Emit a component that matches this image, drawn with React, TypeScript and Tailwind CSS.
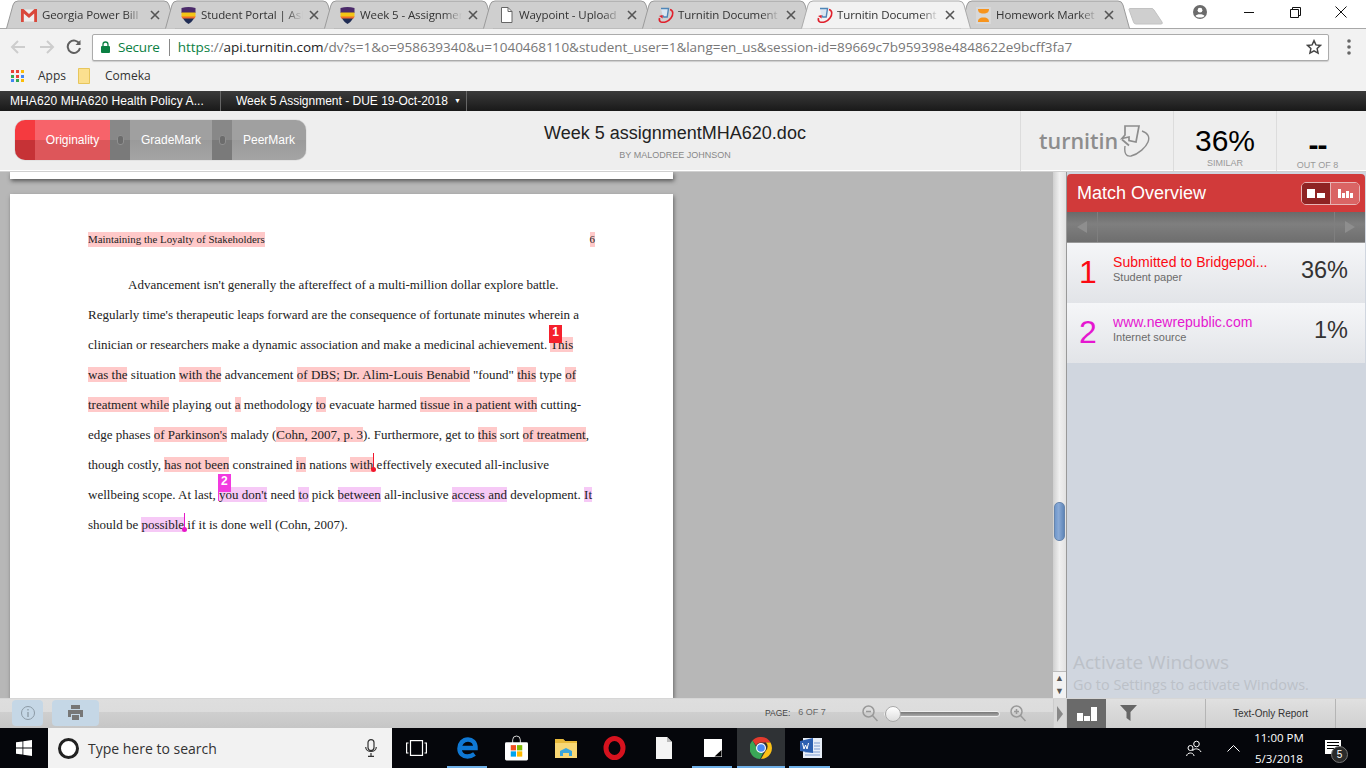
import React from "react";

const TiiIcon = ({ c = "#e0202c" }: { c?: string }) => (
  <svg width="17" height="17" viewBox="0 0 17 17" fill="none">
    <path d="M4 1.500h7.500l-1.300 8.500H6.800L5.600 8.500" stroke="#4f86b8" strokeWidth="1.400" fill="#dbe7f2" />
    <path d="M13 2.500c3.500 1 3.500 5 1 8.500-2.500 3.500-7 5-10 4-1.600-.6-2-2-1.500-4" stroke={c} strokeWidth="1.600" />
    <path d="M2 9l3.500-1 .2 3.500z" fill={c} />
  </svg>
);
const Gmail = () => (
  <svg width="16" height="13" viewBox="0 0 16 13">
    <rect x="0.500" y="0.500" width="15" height="12" fill="#eee" />
    <path d="M0 0h2.500L8 5l5.500-5H16v13h-2.800V4.600L8 9 2.800 4.600V13H0z" fill="#d9483b" />
  </svg>
);
const Shield = () => (
  <svg width="15" height="17" viewBox="0 0 15 17">
    <path d="M0.500 1Q7.500 -1 14.500 1V6H0.500z" fill="#4b2a6a" />
    <path d="M0.500 5.500H14.500V10H0.500z" fill="#f3c515" />
    <path d="M0.500 9.500H14.500Q14 11 13 12H2Q1 11 .5 9.500z" fill="#ef6c2c" />
    <path d="M2 11.500H13Q11 15 7.500 17 4 15 2 11.500z" fill="#1f2c54" />
  </svg>
);
const DocIcon = () => (
  <svg width="13" height="16" viewBox="0 0 13 16" fill="#fff" stroke="#666">
    <path d="M1.500.5h6.500l4 4v11h-10.500z" />
    <path d="M8 .5v4h4" fill="none" />
  </svg>
);
const Hw = () => (
  <svg width="15" height="17" viewBox="0 0 15 17">
    <rect x="0" y="0" width="15" height="17" fill="#d8d8d8" />
    <path d="M2 2h11c0 3-1.500 4.500-5.500 4.500S2 5 2 2zM2 15h11c0-3-1.500-4.500-5.500-4.500S2 12 2 15z" fill="#f7941d" />
  </svg>
);

const tabs: { icon: React.ReactNode; title: string; active?: boolean }[] = [
  { icon: <Gmail />, title: "Georgia Power Bill" },
  { icon: <Shield />, title: "Student Portal | Ask" },
  { icon: <Shield />, title: "Week 5 - Assignment" },
  { icon: <DocIcon />, title: "Waypoint - Upload" },
  { icon: <TiiIcon />, title: "Turnitin Document" },
  { icon: <TiiIcon />, title: "Turnitin Document", active: true },
  { icon: <Hw />, title: "Homework Market" },
];

const Tab = ({ icon, title, active }: { icon: React.ReactNode; title: string; active?: boolean }) => (
  <div className={`relative w-[170px] h-[29px] -mr-[11px] shrink-0 ${active ? "z-10" : ""}`}>
    <svg className="absolute inset-0" width="170" height="29" viewBox="0 0 170 29">
      <path
        d="M0.500 28.500L7 5Q8 1 12 1H158Q162 1 163 5L169.500 28.500"
        fill={active ? "#f2f2f2" : "#cfcfcf"}
        stroke={active ? "#aaaaaa" : "#9a9a9a"}
      />
    </svg>
    <div className="relative flex items-center h-[29px] pl-[14px] pt-[1px]">
      <span className="w-[18px] flex justify-center shrink-0">{icon}</span>
      <span className="ml-[4px] w-[102px] overflow-hidden whitespace-nowrap text-[11.500px] tracking-[-0.1px] text-[#333] font-['Open_Sans','Noto_Sans',sans-serif] [mask-image:linear-gradient(90deg,#000_82%,transparent)]">
        {title}
      </span>
      <svg className="ml-[6px] shrink-0" width="10" height="10" viewBox="0 0 10 10" stroke="#555" strokeWidth="1.600">
        <path d="M1 1l8 8M9 1l-8 8" />
      </svg>
    </div>
  </div>
);

const Hl = ({ children }: { children: React.ReactNode }) => <span className="bg-[#ffc9c9]">{children}</span>;
const Pk = ({ children }: { children: React.ReactNode }) => <span className="bg-[#f6c9f6]">{children}</span>;

const Line = ({ className = "", children }: { className?: string; children: React.ReactNode }) => (
  <p className={`h-[30px] leading-[30px] whitespace-nowrap [text-align-last:justify] ${className}`}>{children}</p>
);

const Segment = ({ label, width }: { label: string; width: string }) => (
  <div className="flex h-full">
    <div className="relative w-[20px] h-full bg-[linear-gradient(#888_0,#888_49%,#7a7a7a_50%,#7a7a7a_100%)] flex items-center justify-center">
      <span className="w-[7px] h-[10px] rounded-[3px] bg-[#6c6c6c] border border-[#909090]" />
    </div>
    <div className={`${width} h-full flex items-center justify-center text-white text-[12px] bg-[linear-gradient(#a0a0a0_0,#a0a0a0_49%,#9a9a9a_50%,#a4a4a4_100%)]`}>
      {label}
    </div>
  </div>
);

const Match = ({ n, title, sub, pct, color }: { n: string; title: string; sub: string; pct: string; color: string }) => (
  <div className="h-[60px] flex items-center bg-[linear-gradient(#f5f6f8,#e2e4e8)]">
    <div className={`w-[46px] pl-[12px] pb-[2px] text-[32px] leading-none ${color}`}>{n}</div>
    <div className="w-[160px] pb-[9px]">
      <div className={`text-[14px] leading-[16px] truncate tracking-[0.05px] ${color}`}>{title}</div>
      <div className="text-[11px] leading-[14px] text-[#6b6b6b] font-medium">{sub}</div>
    </div>
    <div className="flex-1 text-right pr-[17px] text-[23.500px] leading-none text-[#333] pb-[4px]">{pct}</div>
  </div>
);

const TaskIcon = ({ line, children }: { line?: boolean; children: React.ReactNode }) => (
  <div className="relative w-[49px] flex items-center justify-center">
    {children}
    {line && <span className="absolute bottom-0 left-[4px] right-[5px] h-[2px] bg-[#6fb0e8]" />}
  </div>
);

export default function App() {
  return (
    <div className="w-[1366px] h-[768px] overflow-hidden flex flex-col bg-white font-['Liberation_Sans',Arial,sans-serif]">
      {/* Chrome tabs */}
      <div className="h-[29px] shrink-0 flex bg-white border-b border-[#a8a8a8] relative">
        <div className="flex pl-[6px]">
          {tabs.map((t, i) => (
            <Tab key={i} {...t} />
          ))}
          <svg className="ml-[9px] mt-[8px]" width="36" height="17" viewBox="0 0 36 17">
            <path d="M1 1.500Q1 .5 2 .5H24Q25 .5 26 2L34 14Q35 16 33 16H8Q6 16 5.500 14z" fill="#cfcfcf" stroke="#c2c2c2" />
          </svg>
        </div>
        <div className="ml-auto flex items-center">
          <svg className="mr-[37px] mb-[4px]" width="14" height="14" viewBox="0 0 14 14">
            <circle cx="7" cy="7" r="7" fill="#6b6b6b" />
            <circle cx="7" cy="5.200" r="2.400" fill="#fff" />
            <path d="M2.500 11c1-2.500 8-2.500 9 0-2 2-7 2-9 0z" fill="#fff" />
          </svg>
          <svg className="mr-[35px] mb-[4px]" width="11" height="11" viewBox="0 0 11 11" stroke="#111">
            <path d="M0 5.500h10" />
          </svg>
          <svg className="mr-[34px] mb-[4px]" width="11" height="11" viewBox="0 0 11 11" fill="none" stroke="#111">
            <path d="M.5 2.500h8v8h-8zM2.500 2.500V.5h8v8h-2" />
          </svg>
          <svg className="mr-[19px] mb-[4px]" width="12" height="12" viewBox="0 0 12 12" stroke="#111">
            <path d="M.5.5l11 11M11.500.5l-11 11" />
          </svg>
        </div>
      </div>

      {/* Toolbar */}
      <div className="h-[36px] shrink-0 flex items-center bg-[#f2f2f2]">
        <svg className="ml-[10px]" width="16" height="16" viewBox="0 0 16 16" fill="none" stroke="#cdcdcd" strokeWidth="2">
          <path d="M15 8H2M8 2L2 8l6 6" />
        </svg>
        <svg className="ml-[13px]" width="16" height="16" viewBox="0 0 16 16" fill="none" stroke="#cdcdcd" strokeWidth="2">
          <path d="M1 8h13M8 2l6 6-6 6" />
        </svg>
        <svg className="ml-[11px]" width="16" height="16" viewBox="0 0 16 16" fill="none" stroke="#5f5f5f" strokeWidth="2">
          <path d="M13.500 5A6.200 6.200 0 1 0 14 9" />
          <path d="M14.500 1v5h-5z" fill="#5f5f5f" stroke="none" />
        </svg>
        <div className="ml-[10px] w-[1237px] h-[27px] bg-white border border-[#ababab] rounded-[2px] flex items-center text-[13.500px] font-['Open_Sans','Noto_Sans',sans-serif] shadow-[0_1px_1px_#ccc]">
          <svg className="ml-[8px]" width="9" height="12" viewBox="0 0 9 12">
            <path d="M2 5V3.500a2.500 2.500 0 0 1 5 0V5" fill="none" stroke="#0b8043" strokeWidth="1.300" />
            <rect y="5" width="9" height="7" rx="1" fill="#0b8043" />
          </svg>
          <span className="ml-[8px] text-[#0b8043] tracking-[-0.2px]">Secure</span>
          <span className="ml-[9px] w-px h-[17px] bg-[#888]" />
          <span className="ml-[8px] whitespace-nowrap text-[#777] tracking-[-0.01px]">
            <span className="text-[#0b8043]">https</span>://<span className="text-[#222]">api.turnitin.com</span>
            /dv?s=1&amp;o=958639340&amp;u=1040468110&amp;student_user=1&amp;lang=en_us&amp;session-id=89669c7b959398e4848622e9bcff3fa7
          </span>
          <svg className="ml-auto mr-[6px]" width="16" height="16" viewBox="0 0 24 24" fill="none" stroke="#444" strokeWidth="2.200">
            <path d="M12 2.500l2.900 6.300 6.900.8-5.100 4.700 1.400 6.800-6.100-3.400-6.100 3.400 1.400-6.800L2.300 9.600l6.900-.8z" />
          </svg>
        </div>
        <svg className="ml-[18px]" width="4" height="16" viewBox="0 0 4 16" fill="#666">
          <circle cx="2" cy="2" r="1.800" />
          <circle cx="2" cy="8" r="1.800" />
          <circle cx="2" cy="14" r="1.800" />
        </svg>
      </div>

      {/* Bookmarks */}
      <div className="h-[26px] shrink-0 flex items-center bg-[#f2f2f2] text-[12px] text-[#333] font-['Open_Sans','Noto_Sans',sans-serif] pb-[4px]">
        <div className="ml-[11px] grid grid-cols-3 gap-[1.500px] w-[13px]">
          {["#e94235", "#e94235", "#fbbc05", "#34a853", "#e94235", "#4285f4", "#4285f4", "#34a853", "#fbbc05"].map((c, i) => (
            <span key={i} className="w-[3px] h-[3px]" style={{ background: c }} />
          ))}
        </div>
        <span className="ml-[14px]">Apps</span>
        <svg className="ml-[12px]" width="12" height="16" viewBox="0 0 12 16">
          <path d="M.5.5h11v15H.5z" fill="#fbe08f" stroke="#e7c65c" />
        </svg>
        <span className="ml-[15px]">Comeka</span>
      </div>

      {/* Course bar */}
      <div className="h-[20px] shrink-0 flex items-center bg-[linear-gradient(#3b3b3b,#191919)] text-white text-[12px]">
        <div className="w-[220px] pl-[10px] whitespace-nowrap tracking-[0.1px]">MHA620 MHA620 Health Policy A...</div>
        <div className="w-px h-full bg-[#666]" />
        <div className="w-[245px] pl-[15px] flex items-center whitespace-nowrap">
          Week 5 Assignment - DUE 19-Oct-2018
          <span className="ml-[6px] text-[7px]">▼</span>
        </div>
        <div className="w-px h-full bg-[#666]" />
      </div>

      {/* Header */}
      <div className="h-[61px] shrink-0 flex bg-[#eeeeee] border-b border-[#d0d0d0] shadow-[inset_0_-1px_0_#fff]">
        <div className="w-[510px] pl-[15px] pt-[9px]">
          <div className="w-[291px] h-[40px] rounded-[10px] overflow-hidden flex shadow-[0_0_1px_#888]">
            <div className="w-[20px] h-full bg-[linear-gradient(#f53a3f_0,#f53a3f_49%,#c63236_50%,#c63236_100%)]" />
            <div className="w-[75px] h-full flex items-center justify-center text-white text-[12px] bg-[linear-gradient(#f7636a_0,#f7636a_49%,#dd565a_50%,#dd565a_100%)]">
              Originality
            </div>
            <Segment label="GradeMark" width="w-[82px]" />
            <Segment label="PeerMark" width="w-[74px]" />
          </div>
        </div>
        <div className="w-[330px] text-center pt-[12px]">
          <div className="text-[18px] leading-[21px] text-[#222]">Week 5 assignmentMHA620.doc</div>
          <div className="text-[9px] leading-[12px] mt-[5px] text-[#888]">BY MALODREE JOHNSON</div>
        </div>
        <div className="ml-auto w-[153px] border-l border-[#dcdcdc] flex items-center pl-[18px] pb-[1px]">
          <span className="font-['Open_Sans','Noto_Sans',sans-serif] font-semibold text-[#8d8d8d] text-[21.500px] leading-none">turnitin</span>
          <svg className="ml-0 mt-[2px]" width="32" height="33" viewBox="0 0 32 33" fill="none" stroke="#8d8d8d" strokeWidth="1.700">
            <path d="M7 1h14l-3 16-7-1.500V12l-7 1.500 3-3.500z" />
            <path d="M4 14.500l7 6" />
            <path d="M24 6c6 2 8 6 6 11s-9 12-17 14c-5 1-7-3-6-10" strokeWidth="1.400" />
          </svg>
        </div>
        <div className="w-[103px] border-l border-[#dcdcdc] text-center pt-[13px]">
          <div className="text-[30px] leading-[34px] text-black">36%</div>
          <div className="text-[9px] leading-[12px] -mt-[1px] text-[#999]">SIMILAR</div>
        </div>
        <div className="w-[90px] border-l border-[#dcdcdc] text-center pt-[20px] pr-[8px]">
          <div className="text-[30px] leading-[28px] font-bold text-black tracking-[-1px]">--</div>
          <div className="text-[9px] leading-[12px] text-[#999]">OUT OF 8</div>
        </div>
      </div>

      {/* Main */}
      <div className="flex-1 min-h-0 flex">
        <div className="w-[1053px] h-full bg-[#b7b7b7] relative overflow-hidden pl-[10px]">
          <div className="w-[663px] h-[7px] bg-white shadow-[1px_2px_4px_#555]" />
          <div className="mt-[15px] w-[663px] h-[504px] bg-white shadow-[1px_2px_4px_#666] pl-[78px] pt-[38px] font-['Liberation_Serif','Times_New_Roman',serif] text-[13px] text-[#222]">
            <div className="w-[507px] flex justify-between h-[15px] leading-[15px] text-[10.900px] mb-[23px]">
              <span className="bg-[#ffc9c9]">Maintaining the Loyalty of Stakeholders</span>
              <span className="bg-[#ffc9c9]">6</span>
            </div>
            <Line className="w-[469px] pl-[40px]">Advancement isn't generally the aftereffect of a multi-million dollar explore battle.</Line>
            <Line className="w-[491px]">Regularly time's therapeutic leaps forward are the consequence of fortunate minutes wherein a</Line>
            <Line className="w-[485px]">
              clinician or researchers make a dynamic association and make a medicinal achievement.{" "}
              <span className="relative bg-[#ffc9c9]">
                This
                <span className="absolute -top-[12px] -left-[1px] w-[13px] h-[18px] bg-[#f5202c] text-white text-[12px] leading-[15px] font-bold text-center font-['Liberation_Sans',sans-serif] [text-align-last:center]">
                  1
                </span>
              </span>
            </Line>
            <Line className="w-[488px]">
              <Hl>was the</Hl> situation <Hl>with the</Hl> advancement <Hl>of DBS; Dr. Alim-Louis Benabid</Hl> "found" <Hl>this</Hl> type <Hl>of</Hl>
            </Line>
            <Line className="w-[493px]">
              <Hl>treatment while</Hl> playing out <Hl>a</Hl> methodology <Hl>to</Hl> evacuate harmed <Hl>tissue in a patient with</Hl> cutting-
            </Line>
            <Line className="w-[500px]">
              edge phases <Hl>of Parkinson's</Hl> malady (<Hl>Cohn, 2007, p. 3</Hl>). Furthermore, get to <Hl>this</Hl> sort <Hl>of treatment</Hl>,
            </Line>
            <Line className="w-[461px]">
              though costly, <Hl>has not been</Hl> constrained <Hl>in</Hl> nations{" "}
              <span className="relative bg-[#ffc9c9]">
                with
                <span className="absolute -right-[1px] top-[-4px] w-px h-[16px] bg-[#f1172c]" />
                <span className="absolute -right-[3px] top-[10px] w-[5px] h-[5px] rounded-full bg-[#f1172c]" />
              </span>{" "}
              effectively executed all-inclusive
            </Line>
            <Line className="w-[504px]">
              wellbeing scope. At last,{" "}
              <span className="relative bg-[#f6c9f6]">
                you don't
                <span className="absolute -top-[13px] -left-[1px] w-[13px] h-[18px] bg-[#f23ae0] text-white text-[12px] leading-[15px] font-bold text-center font-['Liberation_Sans',sans-serif] [text-align-last:center]">
                  2
                </span>
                <span className="absolute top-[4px] -left-[1px] w-px h-[10px] bg-[#f23ae0]" />
              </span>{" "}
              need <Pk>to</Pk> pick <Pk>between</Pk> all-inclusive <Pk>access and</Pk> development. <Pk>It</Pk>
            </Line>
            <Line className="w-[259px]">
              should be{" "}
              <span className="relative bg-[#f6c9f6]">
                possible
                <span className="absolute -right-[1px] top-[-4px] w-px h-[16px] bg-[#e617c8]" />
                <span className="absolute -right-[3px] top-[10px] w-[5px] h-[5px] rounded-full bg-[#e617c8]" />
              </span>{" "}
              if it is done well (Cohn, 2007).
            </Line>
          </div>
        </div>

        {/* Scrollbar */}
        <div className="w-[14px] h-full flex flex-col bg-[linear-gradient(90deg,#cfcfcf,#f0f0f0_50%,#e2e2e2)] border-r border-[#999] pt-[330px]">
          <div className="ml-[1px] w-[11px] h-[39px] rounded-[5px] bg-[linear-gradient(90deg,#6f97cb,#8aaad6_40%,#5f86b8)] border border-[#6785ad]" />
          <div className="mt-auto bg-[#f2f2f2] h-[27px] flex flex-col items-center text-[9px] leading-[13px] text-[#555] border-t border-[#bbb]">
            <span>▲</span>
            <span>▼</span>
          </div>
        </div>

        {/* Match panel */}
        <div className="flex-1 h-full flex flex-col bg-[#d0d6df] pt-[2px] pr-[1px] relative">
          <div className="h-[38px] shrink-0 bg-[#d13a3a] rounded-t-[4px] flex items-center pl-[10px] text-white text-[18px]">
            Match Overview
            <div className="ml-auto mr-[5px] w-[59px] h-[23px] border border-[#e8b5b5] rounded-[5px] flex overflow-hidden">
              <div className="w-[29px] bg-[#8f2323] flex items-end justify-center gap-[2px] pb-[6px] border-r border-[#e8b5b5]">
                <span className="w-[8px] h-[9px] bg-white" />
                <span className="w-[8px] h-[5px] bg-white" />
              </div>
              <div className="flex-1 bg-[#da6464] flex items-end justify-center gap-[1px] pb-[6px]">
                <span className="w-[3px] h-[9px] bg-white" />
                <span className="w-[3px] h-[5px] bg-white" />
                <span className="w-[3px] h-[7px] bg-white" />
                <span className="w-[3px] h-[5px] bg-white" />
              </div>
            </div>
          </div>
          <div className="h-[31px] shrink-0 bg-[linear-gradient(#6a6a6a,#7f7f7f_40%,#6e6e6e)] flex items-center justify-between border-b border-[#999]">
            <div className="w-[31px] h-full border-r border-[#7f7f7f] flex items-center justify-center">
              <svg width="10" height="12" viewBox="0 0 10 12" fill="#8e8e8e"><path d="M10 0v12L0 6z" /></svg>
            </div>
            <div className="w-[31px] h-full border-l border-[#7f7f7f] flex items-center justify-center">
              <svg width="10" height="12" viewBox="0 0 10 12" fill="#8e8e8e"><path d="M0 0v12l10-6z" /></svg>
            </div>
          </div>
          <Match n="1" title="Submitted to Bridgepoi..." sub="Student paper" pct="36%" color="text-[#fb0a12]" />
          <Match n="2" title="www.newrepublic.com" sub="Internet source" pct="1%" color="text-[#e516d0]" />
          <div className="mt-auto pl-[6px] pb-[3px] text-[#bcc1c8] font-['Open_Sans','Noto_Sans',sans-serif]">
            <div className="text-[19px] leading-[24px]">Activate Windows</div>
            <div className="text-[14.400px] leading-[20px] mt-[1px] whitespace-nowrap">Go to Settings to activate Windows.</div>
          </div>
        </div>
      </div>

      {/* Bottom bar */}
      <div className="h-[30px] shrink-0 flex bg-[linear-gradient(#dedede,#dcdcdc_45%,#cfcfcf_46%,#c6c6c6)] border-t border-[#d6d6d6]">
        <div className="w-[1053px] flex items-center pl-[12px] relative">
          <div className="w-[31px] h-[26px] -mt-[2px] rounded-[4px] bg-[#c5d7e6] flex items-center justify-center">
            <svg width="14" height="14" viewBox="0 0 14 14" fill="none" stroke="#8c9aa5">
              <circle cx="7" cy="7" r="6.500" />
              <path d="M7 3v1.500M7 6v5" strokeWidth="1.300" />
            </svg>
          </div>
          <div className="ml-[9px] w-[47px] h-[26px] -mt-[2px] rounded-[4px] bg-[#c5d7e6] flex items-center justify-center">
            <svg width="15" height="15" viewBox="0 0 15 15" fill="#777">
              <path d="M3 0h9v4H3zM0 5h15v7h-3v-3H3v3H0zM4 10h7v5H4z" />
            </svg>
          </div>
          <span className="ml-[666px] text-[8.500px] text-[#444] mb-[1px]">PAGE:</span>
          <span className="ml-[8px] text-[9px] text-[#666] mb-[1px]">6 OF 7</span>
          <svg className="ml-[36px]" width="16" height="17" viewBox="0 0 16 17" fill="none" stroke="#999" strokeWidth="1.500">
            <circle cx="6.500" cy="6.500" r="5.500" />
            <path d="M10.500 10.500l5 5.500M4 6.500h5" />
          </svg>
          <div className="relative ml-[6px] w-[116px] h-[6px] rounded-[3px] bg-[linear-gradient(#777,#aaa)] border border-[#eee]">
            <span className="absolute left-0 -top-[6px] w-[16px] h-[16px] rounded-full bg-[linear-gradient(#fff,#ddd)] border border-[#aaa]" />
          </div>
          <svg className="ml-[10px]" width="16" height="17" viewBox="0 0 16 17" fill="none" stroke="#999" strokeWidth="1.500">
            <circle cx="6.500" cy="6.500" r="5.500" />
            <path d="M10.500 10.500l5 5.500M4 6.500h5M6.500 4v5" />
          </svg>
        </div>
        <div className="w-[14px] bg-[#d8d8d8] border-x border-[#ccc] flex items-center justify-center">
          <svg width="6" height="16" viewBox="0 0 6 16" fill="#888">
            <path d="M0 0l6 8-6 8z" />
          </svg>
        </div>
        <div className="flex-1 flex items-stretch bg-[linear-gradient(#e0e0e0,#d0d0d0)]">
          <div className="w-[39px] bg-[#6a6a6a] flex items-end justify-center gap-[1px] pb-[7px]">
            <span className="w-[6px] h-[8px] bg-white" />
            <span className="w-[6px] h-[5px] bg-white" />
            <span className="w-[6px] h-[14px] bg-white" />
          </div>
          <div className="w-[99px] flex items-center pl-[14px] pb-[2px]">
            <svg width="17" height="16" viewBox="0 0 17 16" fill="#666">
              <path d="M0 0h17l-6.500 7v9l-4-3V7z" />
            </svg>
          </div>
          <div className="w-[131px] border-x border-[#b5b5b5] flex items-center justify-center text-[10px] text-[#333]">
            Text-Only Report
          </div>
        </div>
      </div>

      {/* Taskbar */}
      <div className="h-[40px] shrink-0 bg-[#05060b] flex items-stretch text-white">
        <div className="w-[48px] flex items-center justify-center">
          <svg width="16" height="16" viewBox="0 0 16 16" fill="#fff">
            <path d="M0 2.300l6.500-.9v6.200H0zM7.300 1.300L16 0v7.600H7.300zM0 8.400h6.500v6.200L0 13.700zM7.300 8.400H16V16l-8.700-1.300z" />
          </svg>
        </div>
        <div className="w-[344px] bg-[#f2f2f2] flex items-center">
          <span className="ml-[10px] w-[21px] h-[21px] rounded-full border-[3px] border-[#222] bg-white" />
          <span className="ml-[9px] text-[14px] text-[#333] font-['Open_Sans','Noto_Sans',sans-serif]">Type here to search</span>
          <svg className="ml-auto mr-[15px]" width="12" height="18" viewBox="0 0 12 18" fill="none" stroke="#333" strokeWidth="1.200">
            <rect x="3" y=".6" width="6" height="11" rx="3" />
            <path d="M.7 8c0 6 10.600 6 10.600 0M6 14v3M3 17.400h6" />
          </svg>
        </div>
        <div className="w-[48px] mr-[3px] flex items-center justify-center">
          <svg width="21" height="16" viewBox="0 0 21 16" fill="none" stroke="#fff" strokeWidth="1.200">
            <rect x="4.500" y=".6" width="12" height="14.800" />
            <path d="M2.500 3H.6v10h1.900M18.500 3h1.900v10h-1.900" />
          </svg>
        </div>
        <TaskIcon line>
          <svg width="21" height="22" viewBox="0 0 21 22" fill="none" stroke="#0f78d4" strokeWidth="4.500">
            <path d="M3 11h15.500C18.500 5 15 2.500 11 2.500 6 2.500 2.500 6.500 2.500 11.500c0 5 3.500 8 8 8 3 0 5-1 7-2.500" />
          </svg>
        </TaskIcon>
        <TaskIcon>
          <svg width="23" height="26" viewBox="0 0 24 26">
            <path d="M8 8V4.500a4 4 0 0 1 8 0V8" fill="none" stroke="#ddd" />
            <rect y="7" width="24" height="19" rx="1.500" fill="#fff" />
            <rect x="6" y="10" width="5.500" height="5.500" fill="#f25022" />
            <rect x="12.500" y="10" width="5.500" height="5.500" fill="#7fba00" />
            <rect x="6" y="16.500" width="5.500" height="5.500" fill="#00a4ef" />
            <rect x="12.500" y="16.500" width="5.500" height="5.500" fill="#ffb900" />
          </svg>
        </TaskIcon>
        <TaskIcon>
          <svg width="22" height="19" viewBox="0 0 22 19">
            <path d="M0 0h8l2 2h12v17H0z" fill="#f8d775" />
            <path d="M0 0h8l2 2h12v2H0z" fill="#e8b93a" />
            <path d="M5 17v-5l6-3 6 3v5h-3v-3H8v3z" fill="#3aa6dd" />
          </svg>
        </TaskIcon>
        <TaskIcon>
          <svg width="23" height="24" viewBox="0 0 23 24" fill="none" stroke="#d6121e" strokeWidth="5">
            <ellipse cx="11.500" cy="12" rx="8.500" ry="9.500" />
          </svg>
        </TaskIcon>
        <TaskIcon>
          <svg width="16" height="22" viewBox="0 0 16 22">
            <path d="M0 0h11l5 5v17H0z" fill="#f4f4f4" />
            <path d="M11 0l5 5h-5z" fill="#bbb" />
          </svg>
        </TaskIcon>
        <TaskIcon line>
          <svg width="18" height="18" viewBox="0 0 18 18">
            <rect width="18" height="18" fill="#fff" />
            <path d="M17.500 11L10.500 17.500H17.500z" fill="#000" />
          </svg>
        </TaskIcon>
        <div className="relative w-[48px] bg-[#2f3235] flex items-center justify-center">
          <svg width="22" height="22" viewBox="0 0 22 22">
            <path d="M11 0a11 11 0 0 1 9.500 5.500H11a5.500 5.500 0 0 0-5 3L2.500 3.500A11 11 0 0 1 11 0z" fill="#e33b2e" />
            <path d="M20.500 5.500A11 11 0 0 1 11 22l4.800-8.300a5.500 5.500 0 0 0 0-8.200z" fill="#fbc116" />
            <path d="M2.500 3.500L6.800 11a5.500 5.500 0 0 0 6.500 4.500L10 22A11 11 0 0 1 2.500 3.500z" fill="#3aa757" />
            <circle cx="11" cy="11" r="5" fill="#fff" />
            <circle cx="11" cy="11" r="3.800" fill="#4a8af4" />
          </svg>
          <span className="absolute bottom-0 inset-x-0 h-[2px] bg-[#6fb0e8]" />
        </div>
        <div className="relative ml-[1px] w-[49px] flex items-center justify-center">
          <svg width="22" height="22" viewBox="0 0 22 22">
            <rect x="3" y="1" width="19" height="20" fill="#e8eef8" />
            <path d="M14 6h6M14 9h6M14 12h6M5 15h15M5 18h15" stroke="#7d9cd0" />
            <path d="M0 4l13-3v15l-13-2z" fill="#2b5fb0" />
            <path d="M2.500 6l1.500 6 1.500-4 1.500 4 1.500-6" fill="none" stroke="#fff" strokeWidth="1" />
          </svg>
          <span className="absolute bottom-0 left-[3px] right-[5px] h-[2px] bg-[#6fb0e8]" />
        </div>
        <div className="ml-auto flex items-center">
          <svg className="mr-[25px]" width="16" height="17" viewBox="0 0 16 17" fill="none" stroke="#fff">
            <circle cx="10.500" cy="4" r="2.800" />
            <path d="M6.500 11c1-3 7-3 8.500 1" />
            <circle cx="4.500" cy="8" r="2.500" />
            <path d="M.6 16c.5-4 7-4 7.500 0" />
          </svg>
          <svg className="mr-[11px]" width="13" height="8" viewBox="0 0 13 8" fill="none" stroke="#fff">
            <path d="M.5 7.500l6-6 6 6" />
          </svg>
          <div className="w-[56px] text-center text-[11.500px] leading-[21px] font-['Open_Sans','Noto_Sans',sans-serif] mr-[18px]">
            <div>11:00 PM</div>
            <div>5/3/2018</div>
          </div>
          <div className="relative w-[16px] h-[14px] mr-[25px] mb-[3px] bg-white flex flex-col gap-[2px] px-[2px] py-[2px]">
            <span className="h-px bg-black" />
            <span className="h-px bg-black" />
            <span className="h-px bg-black" />
            <span className="absolute -right-[7px] -bottom-[9px] w-[17px] h-[17px] rounded-full bg-[#2a2a2a] border border-[#777] text-[10px] leading-[15px] text-center">5</span>
          </div>
        </div>
      </div>
    </div>
  );
}
